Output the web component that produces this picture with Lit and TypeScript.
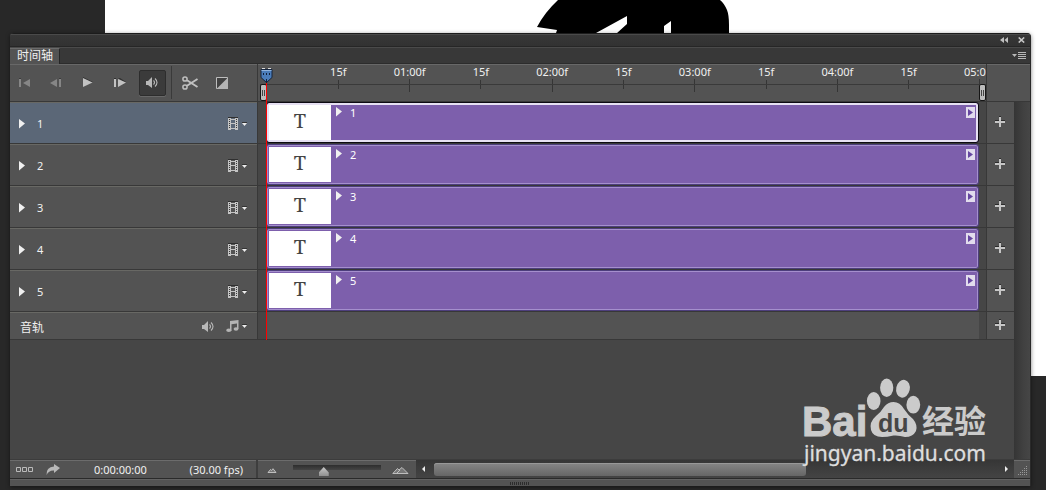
import { LitElement, html, css, svg } from "lit";
import { customElement, property, state } from "lit/decorators.js";
import { classMap } from "lit/directives/class-map.js";

const shared = css`
  * {
    box-sizing: border-box;
  }
  button {
    margin: 0;
    padding: 0;
    border: 0;
    background: none;
    color: inherit;
    font: inherit;
    display: flex;
    align-items: center;
    justify-content: center;
  }
  svg {
    display: block;
    flex: none;
  }
  .edge {
    border-top: 1px solid #686864;
    border-bottom: 1px solid #383838;
  }
`;

const ICONS: Record<string, { w: number; h: number; body: unknown }> = {
  first: {
    w: 12, h: 9,
    body: svg`<path d="M0 1h2v8H0zM11 1v8L4 5z" fill="#868686"/><path d="M0 0h2v1H0z" fill="#3c3c3c"/>`,
  },
  prev: {
    w: 12, h: 9,
    body: svg`<path d="M7 1v8L0 5zM9 1h2v8H9z" fill="#868686"/><path d="M9 0h2v1H9z" fill="#3c3c3c"/>`,
  },
  play: {
    w: 10, h: 11,
    body: svg`<path d="M0 0l10 5H8L0 1.500z" fill="#303030"/><path d="M0 1l9.500 4.500L0 10z" fill="#c2c2c2"/>`,
  },
  next: {
    w: 12, h: 9,
    body: svg`<path d="M0 0h2v1H0zM4 0h2l6 4h-2z" fill="#303030"/><path d="M0 1h2v8H0zM4 1l8 3.500L4 9z" fill="#c2c2c2"/>`,
  },
  sound: {
    w: 12, h: 11,
    body: svg`<path d="M0 4h2l4-4v11L2 8H0z" fill="#b8b8b8"/><path d="M7.500 3.500q2 2 0 4M9 1.500q4 4 0 8" fill="none" stroke="#b8b8b8" stroke-width="1.100"/>`,
  },
  scissors: {
    w: 17, h: 14,
    body: svg`<g fill="none" stroke="#c0c0c0"><circle cx="3" cy="3" r="2.100" stroke-width="1.500"/><circle cx="3" cy="11" r="2.100" stroke-width="1.500"/><path d="M5 4.200L15.500 11M5 9.800L15.500 3" stroke-width="1.900"/></g>`,
  },
  transition: {
    w: 13, h: 13,
    body: svg`<path d="M.5 1.500h11v11H.5z" fill="#424242" stroke="#bdbdbd"/><path d="M12 1.500V13H.5z" fill="#b4b4b4"/>`,
  },
  film: {
    w: 11, h: 13,
    body: svg`<path d="M0 0h10v1H0z" fill="#303030"/><path d="M0 1h3v12H0zM7 1h3v12H7z" fill="#c4c4c4"/><path d="M1 2h1v1H1zM1 4h1v1H1zM1 6h1v1H1zM1 8h1v1H1zM1 10h1v1H1zM8 2h1v1H8zM8 4h1v1H8zM8 6h1v1H8zM8 8h1v1H8zM8 10h1v1H8z" fill="#3a3a3a"/><path d="M3 2h4v1H3zM3 6h4v1H3zM3 11h4v1H3z" fill="#c4c4c4"/>`,
  },
  caret: { w: 5, h: 4, body: svg`<path d="M0 0h5v1H0z" fill="#333"/><path d="M0 1h5L2.500 4z" fill="#eee"/>` },
  music: {
    w: 13, h: 12,
    body: svg`<path d="M4 1l8.500-1v9H11V3.500L5.500 4.200V11H4z" fill="#b4b4b4"/><ellipse cx="2.800" cy="10.300" rx="2.600" ry="1.700" fill="#b4b4b4"/><ellipse cx="10" cy="9" rx="2.400" ry="1.700" fill="#b4b4b4"/>`,
  },
  disclosure: { w: 6, h: 10, body: svg`<path d="M0 0l6 4.500L0 9.500z" fill="#f0f0f0"/>` },
  plus: {
    w: 10, h: 12,
    body: svg`<path d="M0 4h4v1H0zM4 0h2v1H4zM6 4h4v1H6z" fill="#2c2c2c"/><path d="M4 1h2v4h4v2H6v4H4V7H0V5h4z" fill="#c6c6c6"/>`,
  },
  frames: { w: 17, h: 7, body: svg`<path d="M.5 1.500h4v4h-4zM6.500 1.500h4v4h-4zM12.500 1.500h4v4h-4z" fill="none" stroke="#bababa"/>` },
  share: {
    w: 14, h: 11,
    body: svg`<path d="M8 0l6 4-6 5V6.500Q3 6 .5 11 0 3 8 2.500z" fill="#b8b8b8"/>`,
  },
  hillSmall: { w: 10, h: 5, body: svg`<path d="M1 4.500l2.500-3 1 1L6 .7 9 4.500z" fill="#777" stroke="#c8c8c8" stroke-width=".9"/>` },
  hillLarge: { w: 17, h: 7, body: svg`<path d="M.8 6.500L5.500 1.500 7 3l3-2.500 6 6zM5 6L8 3" fill="#777" stroke="#c8c8c8" stroke-width=".9"/>` },
  collapse: { w: 8, h: 6, body: svg`<path d="M4 0v6L0 3zM8 0v6L4.500 3z" fill="#c0c0c0"/>` },
  close: { w: 7, h: 6, body: svg`<path d="M.7.500l5.500 5M6.200.500l-5.500 5" stroke="#c8c8c8" stroke-width="1.600"/>` },
  menu: { w: 14, h: 8, body: svg`<path d="M0 2h5L2.500 5z" fill="#b8b8b8"/><path d="M6 .5h8M6 2.500h8M6 4.500h8M6 6.500h8" stroke="#b8b8b8"/>` },
  left: { w: 3, h: 6, body: svg`<path d="M3 0v6L0 3z" fill="#eee"/>` },
  right: { w: 3, h: 6, body: svg`<path d="M0 0v6l3-3z" fill="#eee"/>` },
};

const icon = (name: string) => {
  const i = ICONS[name];
  return html`<svg width=${i.w} height=${i.h} viewBox="0 0 ${i.w} ${i.h}" aria-hidden="true">${i.body}</svg>`;
};

@customElement("layer-row")
class LayerRow extends LitElement {
  @property() name = "";
  @property({ type: Boolean }) active = false;

  static styles = [
    shared,
    css`
      .row {
        display: flex;
        align-items: center;
        height: 42px;
        padding: 1px 10px 0 9px;
        background: #535353;
        color: #f2f2f2;
      }
      .active {
        background: #5b6777;
      }
      .name {
        flex: 1;
        margin-left: 12px;
      }
      .film {
        gap: 3px;
      }
    `,
  ];

  render() {
    return html`<div class=${classMap({ row: true, edge: true, active: this.active })}>
      <button aria-label="展开">${icon("disclosure")}</button>
      <span class="name">${this.name}</span>
      <button class="film" aria-label="视频选项">${icon("film")}${icon("caret")}</button>
    </div>`;
  }
}

@customElement("clip-row")
class ClipRow extends LitElement {
  @property() name = "";
  @property({ type: Boolean }) active = false;

  static styles = [
    shared,
    css`
      .track {
        height: 42px;
        padding: 0 7px 0 8px;
        background: #464646;
        border-bottom: 1px solid #383838;
      }
      .clip {
        display: flex;
        height: 41px;
        padding: 2px;
        border: 1px solid #4d3e7c;
        border-radius: 3px;
        background: #7d5fac;
        box-shadow: inset 0 0 0 1px #a58fcd;
        color: #fff;
      }
      .active {
        border-color: #0c0a12;
        box-shadow: inset 0 0 0 2px #e6e0f2;
      }
      .thumb {
        width: 62px;
        background: #fff;
        color: #444;
        font: 20px/32px "Noto Serif", "Liberation Serif", serif;
        text-align: center;
      }
      .title {
        display: flex;
        flex: 1;
        gap: 8px;
        margin: 2px 0 0 5px;
        line-height: 11px;
      }
      .badge {
        width: 9px;
        height: 11px;
        margin: 2px 1px 0 0;
        background: #e2dced;
      }
    `,
  ];

  render() {
    return html`<div class="track">
      <div class=${classMap({ clip: true, active: this.active })}>
        <div class="thumb">T</div>
        <div class="title">${icon("disclosure")}<span>${this.name}</span></div>
        <button class="badge" aria-label="动感">
          <svg width="5" height="7" viewBox="0 0 5 7"><path d="M0 0l5 3.500L0 7z" fill="#6546a0" /></svg>
        </button>
      </div>
    </div>`;
  }
}

@customElement("app-root")
class AppRoot extends LitElement {
  @state() private zoom = 33;
  private layers = ["1", "2", "3", "4", "5"];
  private marks = ["15f", "01:00f", "15f", "02:00f", "15f", "03:00f", "15f", "04:00f", "15f", "05:00f"];

  static styles = [
    shared,
    css`
      :host {
        position: relative;
        display: flex;
        min-height: 100vh;
        box-sizing: border-box;
        padding: 33px 15px 4px 10px;
        overflow: hidden;
        background: #282828;
        color: #f0f0f0;
        font: 11px/14px "Noto Sans", "Noto Sans CJK SC", sans-serif;
      }
      .document {
        position: absolute;
        inset: 0 0 114px 105px;
        background: #fff;
      }
      .art {
        margin-left: 431px;
      }
      .panel {
        position: relative;
        flex: 1;
        min-width: 0;
        display: flex;
        flex-direction: column;
        border-right: 1px solid #2a2a2a;
        border-radius: 4px 4px 0 0;
        background: #464646;
        box-shadow: 0 1px 4px rgba(0, 0, 0, 0.5);
        overflow: hidden;
      }
      .titlebar {
        display: flex;
        justify-content: flex-end;
        align-items: center;
        gap: 10px;
        height: 14px;
        padding-right: 5px;
        border-top: 1px solid #1c1c1c;
        border-bottom: 1px solid #262626;
        background: linear-gradient(#4a4a4a 0 1px, #373737 1px, #323232);
      }
      .tabs {
        display: flex;
        justify-content: space-between;
        height: 17px;
        padding-right: 4px;
        border-top: 1px solid #4a4a4a;
        border-bottom: 1px solid #2c2c2c;
        background: #383838;
      }
      .tab {
        height: 17px;
        padding: 0 6px 4px 7px;
        border-right: 1px solid #262626;
        border-top: 1px solid #6a6a6a;
        background: #535353;
        font: 12px/14px "Noto Sans CJK SC", sans-serif;
      }
      .body {
        flex: 1;
        display: flex;
      }
      .head {
        display: flex;
        align-items: center;
        height: 38px;
        padding-bottom: 1px;
        background: #535353;
        border-top: 1px solid #686868;
        border-bottom: 1px solid #383838;
      }
      .left {
        width: 248px;
      }
      .left > .list {
        border-right: 1px solid #383838;
      }
      .tool {
        width: 32px;
        height: 26px;
      }
      .tool:first-child {
        width: 30px;
      }
      .pressed {
        width: 27px;
        margin: 0 5px 0 3px;
        padding-right: 2px;
        border: 1px solid #2d2d2d;
        border-radius: 2px;
        background: #3b3b3b;
        box-shadow: 0 1px 0 #686868;
      }
      .split {
        width: 1px;
        height: 33px;
        margin-right: 2px;
        background: #3a3a3a;
      }
      .audio {
        display: flex;
        align-items: center;
        height: 28px;
        background: #535353;
      }
      .audio-head {
        gap: 12px;
        padding: 0 10px 0 10px;
      }
      .audio-name {
        flex: 1;
        padding-top: 2px;
        font: 12px/16px "Noto Sans CJK SC", sans-serif;
      }
      .music {
        gap: 3px;
      }
      .center {
        flex: 1;
        min-width: 0;
      }
      .timeline {
        position: relative;
      }
      .ruler {
        flex-direction: column;
        align-items: stretch;
        overflow: hidden;
      }
      .marks {
        display: flex;
        height: 27px;
        flex: none;
        margin: 0 6px 0 9px;
      }
      .mark {
        flex: 0 0 10%;
        display: flex;
        flex-direction: column;
        align-items: center;
      }
      .mark:first-child {
        margin-left: 5%;
      }
      .mark::after {
        content: "";
        width: 1px;
        height: 13px;
        background: #353535;
      }
      .mark:nth-child(odd)::after {
        height: 9px;
        margin-top: 1px;
      }
      .range {
        position: absolute;
        top: 20px;
        left: 2px;
        right: 0;
        display: flex;
        justify-content: space-between;
        border-top: 1px solid #3a3a3a;
      }
      .grip {
        width: 7px;
        height: 17px;
        margin-top: -1px;
        border: 1px solid #151515;
        border-radius: 2px;
        background: linear-gradient(90deg, transparent 1px, #444 1px 2px, transparent 2px 3px, #444 3px 4px, transparent 4px) center / 5px 6px no-repeat #bcbcbc;
      }
      .playhead {
        position: absolute;
        top: 4px;
        bottom: 0;
        left: 2px;
        width: 13px;
        display: flex;
        flex-direction: column;
        align-items: center;
      }
      .playhead::after {
        content: "";
        flex: 1;
        width: 1px;
        background: #f00;
      }
      .audio-track {
        height: 28px;
        padding: 0 7px 0 9px;
        background: linear-gradient(#535353, #535353) content-box #464646;
        border-bottom: 1px solid #383838;
      }
      .adds {
        width: 28px;
      }
      .adds > .list {
        border-left: 1px solid #383838;
      }
      .add {
        width: 100%;
        height: 42px;
        padding: 0 1px 2px 0;
        background: #535353;
        border-bottom: 1px solid #383838;
      }
      .add.short {
        height: 28px;
      }
      .side {
        width: 16px;
        display: flex;
        flex-direction: column;
      }
      .vbar {
        flex: 1;
        background: linear-gradient(90deg, #353535, #414141 60%, #464646);
      }
      .footer {
        display: flex;
        height: 20px;
        border-top: 1px solid #3c3c3c;
        border-bottom: 1px solid #2a2a2a;
        background: #535353;
        box-shadow: inset 0 1px 0 #6c6c6c;
      }
      .status {
        display: flex;
        align-items: center;
        width: 248px;
        padding: 1px 13px 0 6px;
        border-right: 2px solid #3e3e3e;
      }
      .share {
        margin: 0 34px 0 13px;
      }
      .fps {
        margin-left: auto;
      }
      .zoom {
        display: flex;
        align-items: center;
        width: 158px;
        padding: 2px 7px 0 9px;
      }
      .slider {
        appearance: none;
        flex: 1;
        min-width: 0;
        height: 14px;
        margin: 0 11px 0 16px;
        background: linear-gradient(#2e2e2e, #444) 0 2px / 100% 5px no-repeat;
      }
      .slider::-webkit-slider-thumb {
        appearance: none;
        width: 10px;
        height: 9px;
        margin-top: 3px;
        background: linear-gradient(#c8c8c8, #909090);
        clip-path: polygon(50% 0, 100% 60%, 100% 100%, 0 100%, 0 60%);
      }
      .hbar {
        flex: 1;
        display: flex;
        align-items: center;
        justify-content: space-between;
        padding: 0 6px;
        background: linear-gradient(#363636, #444);
      }
      .rail {
        flex: 1;
        margin: 0 7px 0 9px;
      }
      .thumb {
        width: 66%;
        height: 13px;
        border-radius: 3px;
        background: linear-gradient(#868686, #666);
        box-shadow: inset 0 1px 0 #989898;
      }
      .corner {
        width: 16px;
        display: flex;
        align-items: flex-end;
        justify-content: flex-end;
        padding: 2px;
      }
      .bottom {
        display: flex;
        justify-content: center;
        align-items: center;
        height: 7px;
        border-top: 1px solid #626262;
        background: #535353;
      }
      .ridge {
        width: 20px;
        height: 3px;
        background: repeating-linear-gradient(90deg, #2c2c2c 0 1px, transparent 1px 2px);
      }
      .watermark {
        position: absolute;
        right: 54px;
        bottom: 20px;
        pointer-events: none;
      }
    `,
  ];

  render() {
    return html`
      <div class="document">
        <svg class="art" width="195" height="33" viewBox="536 0 195 33">
          <path
            d="M537 27Q545 12 558 0H720Q724 3 727 10 729 15 729 25V33H671V21L664 26V33H617L627 24V16L596 33H556L557 30Z"
            fill="#000"
          />
        </svg>
      </div>
      <main class="panel">
        <header class="titlebar">
          <button aria-label="折叠">${icon("collapse")}</button>
          <button aria-label="关闭">${icon("close")}</button>
        </header>
        <nav class="tabs">
          <button class="tab">时间轴</button>
          <button aria-label="菜单">${icon("menu")}</button>
        </nav>
        <section class="body">
          <div class="left">
            <div class="list">
              <div class="head">
                <button class="tool" aria-label="第一帧">${icon("first")}</button>
                <button class="tool" aria-label="上一帧">${icon("prev")}</button>
                <button class="tool" aria-label="播放">${icon("play")}</button>
                <button class="tool" aria-label="下一帧">${icon("next")}</button>
                <button class="tool pressed" aria-label="音频">${icon("sound")}</button>
                <span class="split"></span>
                <button class="tool" aria-label="拆分">${icon("scissors")}</button>
                <button class="tool" aria-label="过渡">${icon("transition")}</button>
              </div>
              ${this.layers.map((n, i) => html`<layer-row .name=${n} .active=${i === 0}></layer-row>`)}
              <div class="audio audio-head edge">
                <span class="audio-name">音轨</span>
                <button aria-label="静音">${icon("sound")}</button>
                <button class="music" aria-label="音乐">${icon("music")}${icon("caret")}</button>
              </div>
            </div>
          </div>
          <div class="center">
            <div class="timeline">
              <div class="head ruler">
                <div class="marks">${this.marks.map((m) => html`<div class="mark">${m}</div>`)}</div>
              </div>
              ${this.layers.map((n, i) => html`<clip-row .name=${n} .active=${i === 0}></clip-row>`)}
              <div class="audio-track"></div>
              <div class="range"><span class="grip"></span><span class="grip"></span></div>
              <div class="playhead">
                <svg width="13" height="15" viewBox="0 0 13 15">
                  <path d="M1 1.500h11v8L6.500 14.500 1 9.500z" fill="#4a7cba" stroke="#15253e" />
                  <path d="M1.500 2.500h10" stroke="#8fb2dc" />
                  <path d="M3 5h1v2H3zM6 5h1v2H6zM9 5h1v2H9zM6 11h1v4H6z" fill="#12213a" />
                  <path d="M2 0h3v1H2zM8 0h3v1H8z" fill="#ddd" />
                </svg>
              </div>
            </div>
          </div>
          <div class="adds">
            <div class="list">
              <div class="head"></div>
              ${this.layers.map(() => html`<button class="add" aria-label="添加媒体">${icon("plus")}</button>`)}
              <button class="add short" aria-label="添加音频">${icon("plus")}</button>
            </div>
          </div>
          <div class="side">
            <div class="head"></div>
            <div class="vbar"></div>
          </div>
        </section>
        <footer class="footer">
          <div class="status">
            <button aria-label="帧动画">${icon("frames")}</button>
            <button class="share" aria-label="渲染">${icon("share")}</button>
            <span>0:00:00:00</span>
            <span class="fps">(30.00 fps)</span>
          </div>
          <div class="zoom">
            ${icon("hillSmall")}
            <input
              class="slider"
              type="range"
              aria-label="缩放"
              .value=${String(this.zoom)}
              @input=${(e: Event) => (this.zoom = Number((e.target as HTMLInputElement).value))}
            />
            ${icon("hillLarge")}
          </div>
          <div class="hbar">
            <button aria-label="向左">${icon("left")}</button>
            <div class="rail"><div class="thumb"></div></div>
            <button aria-label="向右">${icon("right")}</button>
          </div>
          <div class="corner">
            <svg width="10" height="10" viewBox="0 0 10 10">
              <path
                d="M8 0h1v1H8zM6 2h1v1H6zM8 2h1v1H8zM4 4h1v1H4zM6 4h1v1H6zM8 4h1v1H8zM2 6h1v1H2zM4 6h1v1H4zM6 6h1v1H6zM8 6h1v1H8zM0 8h1v1H0zM2 8h1v1H2zM4 8h1v1H4zM6 8h1v1H6zM8 8h1v1H8z"
                fill="#999"
              />
            </svg>
          </div>
        </footer>
        <div class="bottom"><span class="ridge"></span></div>
      </main>
      <svg class="watermark" width="192" height="95" viewBox="0 0 192 95">
        <g fill="#cbcbcb">
          <ellipse cx="73.700" cy="26" rx="6.800" ry="9" />
          <ellipse cx="86.700" cy="12.700" rx="6.600" ry="9.200" />
          <ellipse cx="103" cy="13.700" rx="6.800" ry="9" transform="rotate(12 103 13.700)" />
          <ellipse cx="113.300" cy="29.700" rx="6.900" ry="8.900" />
          <path d="M93.500 27Q100 27 104 34 108 40 113 44 118 50 116 56 113 62 105 62 99 60 93.500 60.500 87 62 82 62 73 62 71 55 69 47 76 41 81 37 84 32 88 27 93.500 27Z" />
          <text x="2" y="61" font-family="Liberation Sans" font-weight="700" font-size="42" stroke="#cbcbcb" stroke-width="1">Bai</text>
          <text x="122" y="58" font-family="Noto Sans CJK SC" font-weight="700" font-size="32">经验</text>
          <text x="4" y="86" font-family="Noto Sans" font-size="21" fill="#dedede" stroke="#dedede" stroke-width=".3">jingyan.baidu.com</text>
        </g>
        <text x="78" y="57" font-family="Liberation Sans" font-weight="700" font-size="25" fill="#464646">du</text>
      </svg>
    `;
  }
}
